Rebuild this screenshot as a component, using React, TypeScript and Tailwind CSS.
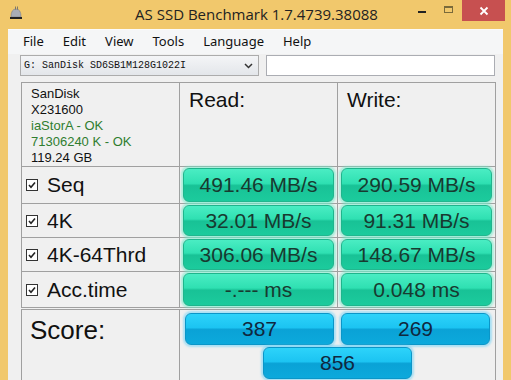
import React from "react";

const GreenPill = ({ value }: { value: string }) => (
  <div className="h-full rounded-[6px] border border-[#1fb58c] bg-[linear-gradient(to_bottom,#4aedc3_0%,#2fe0b2_45%,#18c296_52%,#1ccb9d_100%)] shadow-[0_0_2px_2px_rgba(110,235,200,0.55)] flex items-center justify-center text-[21px] text-[#183a30] font-['Liberation_Sans',Arial,sans-serif]">
    {value}
  </div>
);

const BluePill = ({ value }: { value: string }) => (
  <div className="w-[149px] h-[32px] rounded-[6px] border border-[#0b96c8] bg-[linear-gradient(to_bottom,#2dd3fa_0%,#1cc4f2_45%,#0aa2d6_52%,#0ca9dc_100%)] shadow-[0_0_2px_2px_rgba(110,210,245,0.55)] flex items-center justify-center text-[21px] text-[#10283f] font-['Liberation_Sans',Arial,sans-serif]">
    {value}
  </div>
);

const Check = () => (
  <svg width="12" height="12" viewBox="0 0 12 12" className="shrink-0">
    <rect x="0.5" y="0.5" width="11" height="11" fill="#fff" stroke="#333" />
    <path d="M3 6 L5 8.2 L9 3.6" fill="none" stroke="#222" strokeWidth="1.6" />
  </svg>
);

const rows = [
  { label: "Seq", read: "491.46 MB/s", write: "290.59 MB/s" },
  { label: "4K", read: "32.01 MB/s", write: "91.31 MB/s" },
  { label: "4K-64Thrd", read: "306.06 MB/s", write: "148.67 MB/s" },
  { label: "Acc.time", read: "-.--- ms", write: "0.048 ms" },
];

export default function App() {
  return (
    <div className="w-[511px] h-[380px] overflow-hidden bg-[#f1c86c] flex flex-col font-['Liberation_Sans',Arial,sans-serif]">
      {/* title bar */}
      <div className="h-[29px] shrink-0 flex items-start relative">
        <svg width="16" height="16" viewBox="0 0 16 16" className="absolute left-[8px] top-[5px]">
          <path d="M3 12 Q3 4 8 4 Q13 4 13 12 Z" fill="#a9adb6" stroke="#7a7e88" strokeWidth="0.6" />
          <rect x="7" y="1.5" width="0.8" height="3" fill="#666" />
          <rect x="9" y="1.5" width="0.8" height="3" fill="#666" />
          <rect x="2" y="12" width="12" height="2" fill="#222" />
        </svg>
        <div className="flex-1 h-[29px] flex items-center justify-center pl-[2px] text-[15px] text-[#222] font-['Open_Sans',sans-serif]">
          AS SSD Benchmark 1.7.4739.38088
        </div>
        <div className="absolute right-0 top-0 flex items-start">
          <div className="w-[27px] h-[20px] flex items-center justify-center">
            <div className="w-[8px] h-[2px] bg-[#222] mt-[4px]" />
          </div>
          <div className="w-[27px] h-[20px] flex items-center justify-center">
            <div className="w-[9px] h-[7px] border border-[#7a6a3a] border-t-2 mb-[2px]" />
          </div>
          <div className="w-[43px] h-[21px] bg-[#c75050] flex items-center justify-center mr-[6px]">
            <svg width="10" height="10" viewBox="0 0 10 10">
              <path d="M1.5 1.5 L8.5 8.5 M8.5 1.5 L1.5 8.5" stroke="#fff" strokeWidth="1.8" />
            </svg>
          </div>
        </div>
      </div>

      {/* window body */}
      <div className="flex-1 mx-[8px] bg-[#f0f0f0] border-t border-[#fbfbfb] flex flex-col">
        {/* menu */}
        <div className="h-[24px] flex items-center pl-[15px] gap-[19px] text-[13px] text-[#111] font-['Noto_Sans',sans-serif] bg-[#f5f6f7]">
          <span>File</span>
          <span>Edit</span>
          <span>View</span>
          <span>Tools</span>
          <span>Language</span>
          <span>Help</span>
        </div>

        {/* selectors */}
        <div className="flex items-center mt-[1px] pl-[12px]">
          <div className="w-[239px] h-[21px] border border-[#acacac] bg-[linear-gradient(to_bottom,#f4f5f7,#e3e6ea)] flex items-center pl-[3px] pr-[5px]">
            <span className="flex-1 text-[10px] text-[#111] font-['Liberation_Mono',monospace]">G: SanDisk SD6SB1M128G1022I</span>
            <svg width="9" height="6" viewBox="0 0 9 6">
              <path d="M1 1 L4.5 4.5 L8 1" fill="none" stroke="#333" strokeWidth="1.5" />
            </svg>
          </div>
          <div className="ml-[7px] w-[229px] h-[21px] border border-[#abadb3] bg-white" />
        </div>

        {/* results table */}
        <div className="ml-[13px] mt-[6px] w-[475px] grid grid-cols-[157px_157px_157px] grid-rows-[83px_36px_33px_33px_35px] gap-px bg-[#a0a0a0] p-px">
          <div className="bg-[#f0f0f0] pl-[9px] pt-[3px] text-[13px] leading-[16px] text-[#111]">
            <div>SanDisk</div>
            <div>X231600</div>
            <div className="text-[#2f7d2f]">iaStorA - OK</div>
            <div className="text-[#2f7d2f]">71306240 K - OK</div>
            <div>119.24 GB</div>
          </div>
          <div className="bg-[#f0f0f0] pl-[9px] pt-[1px] text-[21px] text-[#111]">Read:</div>
          <div className="bg-[#f0f0f0] pl-[9px] pt-[1px] text-[21px] text-[#111]">Write:</div>

          {rows.map((r) => (
            <React.Fragment key={r.label}>
              <div className="bg-[#f0f0f0] flex items-center pl-[4px] gap-[9px] text-[21px] text-[#111]">
                <Check />
                <span>{r.label}</span>
              </div>
              <div className="bg-[#f0f0f0] px-[3px] py-[1px]">
                <GreenPill value={r.read} />
              </div>
              <div className="bg-[#f0f0f0] px-[3px] py-[1px]">
                <GreenPill value={r.write} />
              </div>
            </React.Fragment>
          ))}
        </div>

        {/* score */}
        <div className="ml-[13px] mt-px w-[475px] flex-1 border border-[#a0a0a0] border-b-0 flex">
          <div className="w-[158px] border-r border-[#a0a0a0] pl-[8px] pt-[1px] text-[26px] text-[#111]">Score:</div>
          <div className="flex-1 pt-[3px] pl-[5px] flex flex-col gap-[2px]">
            <div className="flex gap-[7px]">
              <BluePill value="387" />
              <BluePill value="269" />
            </div>
            <div className="pl-[78px]">
              <BluePill value="856" />
            </div>
          </div>
        </div>
      </div>
    </div>
  );
}
